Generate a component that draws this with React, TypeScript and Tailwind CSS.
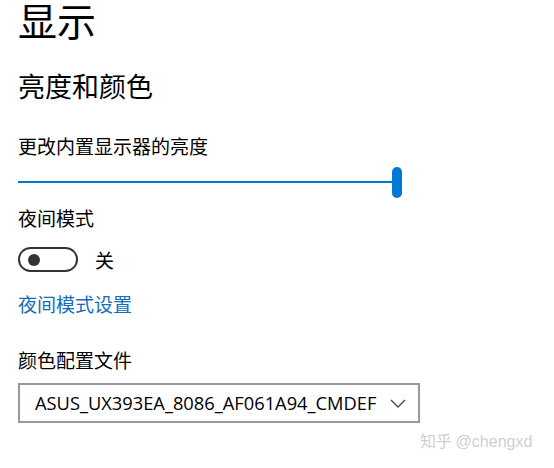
const cjk = "font-['Microsoft_YaHei','Noto_Sans_CJK_SC',sans-serif]";

function BrightnessSlider() {
  return (
    <div className="mt-[11px] flex h-[32px] w-[384px] items-center">
      <div className="h-[2px] flex-1 bg-[#0078d7]" />
      <div className="h-[31px] w-[10px] rounded-full bg-[#0078d7]" />
    </div>
  );
}

function Toggle({ on }: { on: boolean }) {
  return (
    <div className="mt-[20px] flex items-center">
      <div className="flex h-[25px] w-[60px] items-center rounded-full border-2 border-[#333] px-[8px]">
        <div className="h-[12px] w-[12px] rounded-full bg-[#333]" />
      </div>
      <span className="ml-[17px] text-[19px] leading-[19px] text-black">{on ? "开" : "关"}</span>
    </div>
  );
}

function ProfileSelect() {
  return (
    <div className="mt-[14px] flex h-[40px] w-[402px] items-center justify-between border-2 border-[#999] pl-[15px] pr-[12px]">
      <span className="font-['Open_Sans','Noto_Sans',sans-serif] text-[18.3px] leading-none text-black">
        ASUS_UX393EA_8086_AF061A94_CMDEF
      </span>
      <svg width="16" height="9" viewBox="0 0 16 9" fill="none">
        <path d="M1 1l7 7 7-7" stroke="#444" strokeWidth="1.3" />
      </svg>
    </div>
  );
}

export default function App() {
  return (
    <div className={`relative h-[468px] w-[554px] overflow-hidden bg-white pl-[18px] ${cjk}`}>
      <h1 className="text-[39px] leading-[39px] font-normal text-black">显示</h1>
      <h2 className="mt-[33px] text-[27px] leading-[27px] font-normal text-black">亮度和颜色</h2>

      <div className="mt-[37px] text-[19px] leading-[19px] text-black">更改内置显示器的亮度</div>
      <BrightnessSlider />

      <div className="mt-[10px] text-[19px] leading-[19px] text-black">夜间模式</div>
      <Toggle on={false} />

      <div className="mt-[22px] text-[19px] leading-[19px] text-[#106ebe]">夜间模式设置</div>

      <div className="mt-[37px] text-[19px] leading-[19px] text-black">颜色配置文件</div>
      <ProfileSelect />

      {/* watermark */}
      <div className="absolute left-[420px] top-[430px] text-[16px] leading-[20px] text-[#cfcfcf]">
        知乎 <span className="font-['Liberation_Sans',sans-serif]">@chengxd</span>
      </div>
    </div>
  );
}
